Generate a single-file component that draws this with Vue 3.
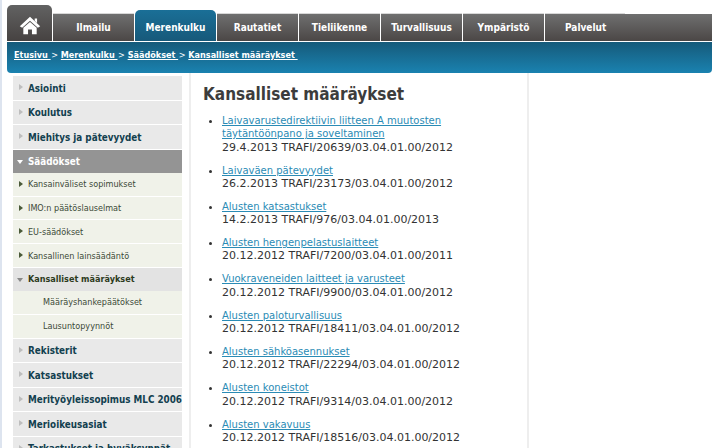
<template>
  <div class="page">
    <div class="tabs">
      <a class="home" href="#">
        <svg width="22" height="19" viewBox="0 0 28 24">
          <path d="M14 1 L27 13 L24 15 L14 6 L4 15 L1 13 Z" fill="#fff" />
          <path d="M20 3h3v6l-3-3z" fill="#fff" />
          <path d="M5.500 15 L14 7.500 L22.500 15 V23 H16.500 V17 H11.500 V23 H5.500 Z" fill="#fff" />
        </svg>
      </a>
      <a
        v-for="tab in tabs"
        :key="tab"
        :class="['tab', { active: tab === 'Merenkulku', last: tab === 'Palvelut' }]"
        href="#"
      >
        {{ tab }}
      </a>
    </div>

    <div class="crumbs">
      <template v-for="(crumb, index) in crumbs" :key="crumb">
        <a href="#">{{ crumb }}&nbsp;</a>
        <span v-if="index < crumbs.length - 1" class="sep">&gt;&nbsp;</span>
      </template>
    </div>

    <div class="columns">
      <nav class="side">
        <template v-for="item in menu" :key="item.name">
          <a :class="['item', item.type]" href="#">
            <i class="arrow"></i>
            <span>{{ item.name }}</span>
          </a>
        </template>
      </nav>

      <main class="content">
        <h1>Kansalliset määräykset</h1>
        <ul>
          <li v-for="doc in docs" :key="doc.code">
            <a href="#">{{ doc.name }}</a><br />
            {{ doc.code }}
          </li>
        </ul>
      </main>

      <aside class="right"></aside>
    </div>
  </div>
</template>

<script setup>
const tabs = ['Ilmailu', 'Merenkulku', 'Rautatiet', 'Tieliikenne', 'Turvallisuus', 'Ympäristö', 'Palvelut']

const crumbs = ['Etusivu', 'Merenkulku', 'Säädökset', 'Kansalliset määräykset']

const menu = [
  { name: 'Asiointi', type: 'top' },
  { name: 'Koulutus', type: 'top' },
  { name: 'Miehitys ja pätevyydet', type: 'top' },
  { name: 'Säädökset', type: 'open' },
  { name: 'Kansainväliset sopimukset', type: 'sub' },
  { name: 'IMO:n päätöslauselmat', type: 'sub' },
  { name: 'EU-säädökset', type: 'sub' },
  { name: 'Kansallinen lainsäädäntö', type: 'sub' },
  { name: 'Kansalliset määräykset', type: 'sub-open' },
  { name: 'Määräyshankepäätökset', type: 'leaf' },
  { name: 'Lausuntopyynnöt', type: 'leaf' },
  { name: 'Rekisterit', type: 'top' },
  { name: 'Katsastukset', type: 'top' },
  { name: 'Merityöyleissopimus MLC 2006', type: 'top' },
  { name: 'Merioikeusasiat', type: 'top' },
  { name: 'Tarkastukset ja hyväksynnät', type: 'top' }
]

const docs = [
  { name: 'Laivavarustedirektiivin liitteen A muutosten täytäntöönpano ja soveltaminen', code: '29.4.2013 TRAFI/20639/03.04.01.00/2012' },
  { name: 'Laivaväen pätevyydet', code: '26.2.2013 TRAFI/23173/03.04.01.00/2012' },
  { name: 'Alusten katsastukset', code: '14.2.2013 TRAFI/976/03.04.01.00/2013' },
  { name: 'Alusten hengenpelastuslaitteet', code: '20.12.2012 TRAFI/7200/03.04.01.00/2011' },
  { name: 'Vuokraveneiden laitteet ja varusteet', code: '20.12.2012 TRAFI/9900/03.04.01.00/2012' },
  { name: 'Alusten paloturvallisuus', code: '20.12.2012 TRAFI/18411/03.04.01.00/2012' },
  { name: 'Alusten sähköasennukset', code: '20.12.2012 TRAFI/22294/03.04.01.00/2012' },
  { name: 'Alusten koneistot', code: '20.12.2012 TRAFI/9314/03.04.01.00/2012' },
  { name: 'Alusten vakavuus', code: '20.12.2012 TRAFI/18516/03.04.01.00/2012' }
]
</script>

<style>
html,
body {
  margin: 0;
  background: #fff;
  overflow: hidden;
}
</style>

<style scoped>
.page {
  width: 718px;
  height: 448px;
  overflow: hidden;
  box-sizing: border-box;
  padding: 4px 6px 0 5px;
  border-left: 2px solid #dde4ef;
  font-family: "DejaVu Sans", Verdana, sans-serif;
  font-size: 11px;
  color: #333;
}

a {
  text-decoration: none;
}

.tabs {
  display: flex;
  align-items: flex-end;
  height: 37px;
}

.home {
  width: 45px;
  height: 36px;
  margin-right: 1px;
  border-radius: 5px 5px 0 0;
  background: linear-gradient(#626262, #464241);
  display: flex;
  justify-content: center;
  padding-top: 11px;
  box-sizing: border-box;
}

.tab {
  width: 81px;
  height: 27px;
  margin-right: 1px;
  background: linear-gradient(#6f6f6f, #4b4746);
  box-shadow: 0 -1px 0 #d8d8d8;
  color: #fff;
  font-family: "DejaVu Sans Condensed", "DejaVu Sans", sans-serif;
  font-size: 10px;
  font-weight: bold;
  line-height: 27px;
  text-align: center;
}

.tab.active {
  height: 31px;
  line-height: 35px;
  border-radius: 5px 5px 0 0;
  background: linear-gradient(#1a6f97, #17597a);
  box-shadow: none;
}

.tab.last {
  position: relative;
  flex: 1;
  margin-right: 0;
  box-shadow: none;
  text-align: left;
  padding-left: 20px;
}

.tab.last::before {
  content: "";
  position: absolute;
  left: 0;
  top: -1px;
  width: 80px;
  height: 1px;
  background: #d8d8d8;
}

.crumbs {
  height: 31px;
  margin-top: 1px;
  border-radius: 0 0 4px 4px;
  background: linear-gradient(#165a7a, #1a82b0);
  padding-left: 7px;
  line-height: 27px;
  font-family: "DejaVu Sans Condensed", "DejaVu Sans", sans-serif;
  font-size: 9px;
  font-weight: bold;
  color: #fff;
}

.crumbs a {
  color: #fff;
  text-decoration: underline;
}

.sep {
  font-weight: normal;
  margin-right: 0.300px;
  margin-left: 0.500px;
}

.columns {
  display: flex;
  height: 376px;
}

.side {
  width: 169px;
  margin: 3.400px 0 0 6px;
  flex: none;
}

.item {
  display: flex;
  align-items: center;
  height: 23.500px;
  margin-bottom: 1px;
  padding-left: 15px;
  background: #e9e9e9;
  color: #12404f;
  font-family: "DejaVu Sans Condensed", "DejaVu Sans", sans-serif;
  font-weight: bold;
  font-size: 9.800px;
  white-space: nowrap;
  position: relative;
}

.arrow {
  position: absolute;
  left: 6px;
  top: 8px;
  border-left: 4px solid #bdbdbd;
  border-top: 3px solid transparent;
  border-bottom: 3px solid transparent;
}

.item.open {
  height: 23px;
  margin-bottom: 0;
  background: #949494;
  color: #fff;
}

.item.open .arrow {
  top: 10px;
  left: 4px;
  border-top: 4px solid #fff;
  border-left: 3px solid transparent;
  border-right: 3px solid transparent;
  border-bottom: 0;
}

.item.sub,
.item.leaf {
  height: 22.750px;
  background: #f0f2e9;
  color: #3c4a38;
  font-weight: normal;
  font-size: 9px;
}

.item.sub .arrow {
  border-left-color: #4a5a38;
}

.item.sub-open {
  height: 23px;
  margin-bottom: 0;
  background: #e3e3e3;
  color: #2c3a20;
  font-size: 9px;
}

.item.sub-open .arrow {
  top: 10px;
  left: 4px;
  border-top: 4px solid #888;
  border-left: 3px solid transparent;
  border-right: 3px solid transparent;
  border-bottom: 0;
}

.item.leaf {
  height: 23px;
  padding-left: 30px;
}

.item.leaf .arrow {
  display: none;
}

.content {
  width: 340px;
  flex: none;
  margin-left: 7px;
  padding-left: 12px;
  box-sizing: border-box;
  border-left: 2px solid #eee;
  border-right: 2px solid #eee;
}

h1 {
  margin: 10px 0 9px;
  font-family: "DejaVu Sans Condensed", "DejaVu Sans", sans-serif;
  font-size: 17px;
  line-height: 22px;
  color: #3c3c3c;
}

ul {
  margin: 0;
  padding: 0 0 0 19px;
  list-style: disc;
}

li {
  max-width: 280px;
  margin-bottom: 9.700px;
  line-height: 13.300px;
  font-size: 11px;
}

li a {
  color: #2a8bb5;
  font-size: 10px;
  text-decoration: underline;
}

.right {
  flex: 1;
}
</style>
